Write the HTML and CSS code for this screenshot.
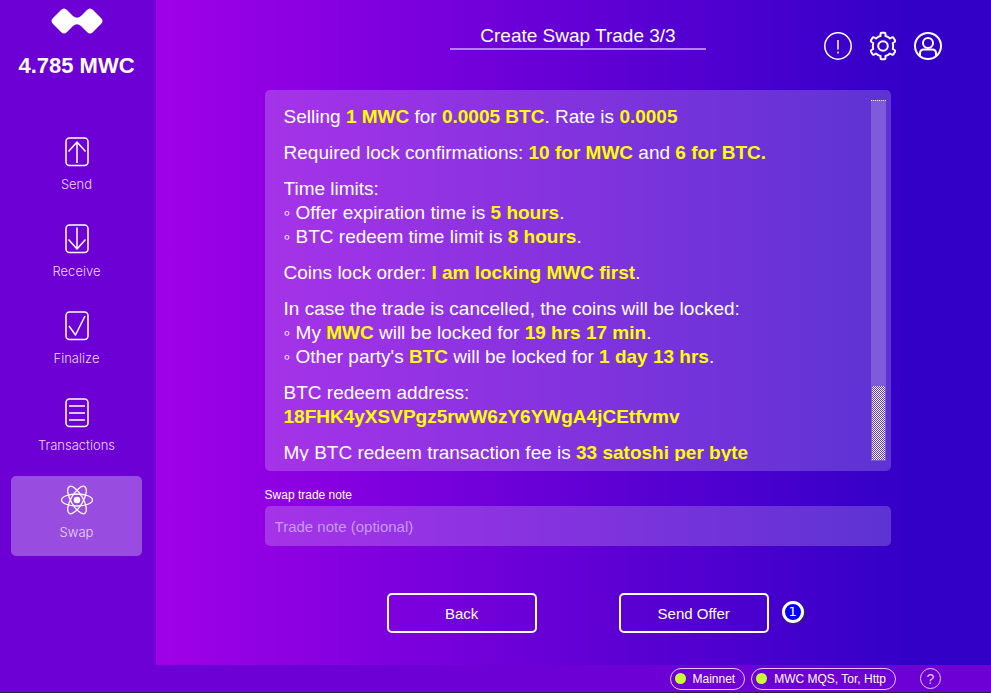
FILE: index.html
```html
<!DOCTYPE html>
<html lang="en">
<head>
<meta charset="utf-8">
<meta name="viewport" content="width=device-width, initial-scale=1">
<title>MWC Wallet</title>
<link rel="stylesheet" href="styles.css">
</head>
<body>
<div class="app">
  <aside class="sidebar">
    <svg class="logo" viewBox="0 0 52 26" aria-hidden="true"><path d="M10 2Q13 -1 16 2L22 8Q26 11.500 30 8L36 2Q39 -1 42 2L50 10Q53 13 50 16L42 24Q39 27 36 24L30 18Q26 14.500 22 18L16 24Q13 27 10 24L2 16Q-1 13 2 10Z"/></svg>
    <p class="balance">4.785 MWC</p>
    <nav class="nav" aria-label="Wallet">
      <a class="nav-item" href="#send">
        <svg viewBox="0 0 32 32" aria-hidden="true"><rect x="5" y="2" width="22" height="27.500" rx="3.500"/><path d="M16 27V6M7.500 15.500 16 6l8.500 9.500"/></svg>
        <span>Send</span>
      </a>
      <a class="nav-item" href="#receive">
        <svg viewBox="0 0 32 32" aria-hidden="true"><rect x="5" y="2" width="22" height="27.500" rx="3.500"/><path d="M16 4.500V26M7.500 16.500 16 26l8.500-9.500"/></svg>
        <span>Receive</span>
      </a>
      <a class="nav-item" href="#finalize">
        <svg viewBox="0 0 32 32" aria-hidden="true"><rect x="5" y="2" width="22" height="27.500" rx="3.500"/><path d="M8 16l6.500 9L24 6"/></svg>
        <span>Finalize</span>
      </a>
      <a class="nav-item" href="#transactions">
        <svg viewBox="0 0 32 32" aria-hidden="true"><rect x="5" y="2" width="22" height="27.500" rx="3.500"/><path d="M8 9h16M8 16h16M8 23h16"/></svg>
        <span>Transactions</span>
      </a>
      <a class="nav-item active" href="#swap" aria-current="page">
        <svg viewBox="0 0 32 32" aria-hidden="true"><g class="orbits"><ellipse cx="16" cy="16" rx="15.500" ry="6"/><ellipse cx="16" cy="16" rx="15.500" ry="6" transform="rotate(60 16 16)"/><ellipse cx="16" cy="16" rx="15.500" ry="6" transform="rotate(120 16 16)"/></g><circle class="solid" cx="16" cy="16" r="3.300"/></svg>
        <span>Swap</span>
      </a>
    </nav>
  </aside>

  <main class="main">
    <header class="header">
      <h1 class="title">Create Swap Trade 3/3</h1>
      <div class="tools">
        <button type="button" class="tool" aria-label="Notifications"><svg viewBox="0 0 30 30"><circle cx="15" cy="15" r="13.200"/><path d="M15 9v9.500M15 20.500v2"/></svg></button>
        <button type="button" class="tool" aria-label="Settings"><svg class="heavy" viewBox="0 0 30 30"><path d="M12.500 5V3Q12.500 1.800 13.700 1.800h2.600Q17.500 1.800 17.500 3v2Q20 5.500 22 7.500l1.800-1Q25 6 25.600 7L27 9.300q.5 1-.5 1.700L24.800 12q.8 3 0 6l1.700 1q1 .7.500 1.700L25.600 23q-.6 1-1.800.5l-1.800-1Q20 24.500 17.500 25v2q0 1.200-1.200 1.200h-2.600Q12.500 28.200 12.500 27v-2Q10 24.500 8 22.500l-1.800 1Q5 24 4.400 23L3 20.700Q2.500 19.700 3.500 19l1.700-1q-.8-3 0-6L3.500 11Q2.500 10.300 3 9.300L4.400 7Q5 6 6.200 6.500l1.800 1Q10 5.500 12.500 5Z"/><circle cx="15" cy="15" r="4.800"/></svg></button>
        <button type="button" class="tool" aria-label="Account"><svg class="heavy" viewBox="0 0 30 30"><circle cx="15" cy="15" r="13"/><circle cx="15" cy="12" r="5"/><path d="M7 25v-2.500Q7 18.500 11 18.500h8q4 0 4 4V25"/></svg></button>
      </div>
    </header>

    <form class="content">
      <section class="panel" aria-label="Trade summary">
        <div class="summary">
          <p>Selling <b>1 MWC</b> for <b>0.0005 BTC</b>. Rate is <b>0.0005</b></p>
          <p>Required lock confirmations: <b>10 for MWC</b> and <b>6 for BTC.</b></p>
          <p>Time limits:<br>◦ Offer expiration time is <b>5 hours</b>.<br>◦ BTC redeem time limit is <b>8 hours</b>.</p>
          <p>Coins lock order: <b>I am locking MWC first</b>.</p>
          <p>In case the trade is cancelled, the coins will be locked:<br>◦ My <b>MWC</b> will be locked for <b>19 hrs 17 min</b>.<br>◦ Other party's <b>BTC</b> will be locked for <b>1 day 13 hrs</b>.</p>
          <p>BTC redeem address:<br><b>18FHK4yXSVPgz5rwW6zY6YWgA4jCEtfvmv</b></p>
          <p>My BTC redeem transaction fee is <b>33 satoshi per byte</b></p>
        </div>
        <div class="track" aria-hidden="true"><div class="thumb"></div></div>
      </section>
      <label class="note-label" for="note">Swap trade note</label>
      <input class="note" id="note" type="text" placeholder="Trade note (optional)">
      <div class="actions">
        <button type="button" class="action">Back</button>
        <button type="button" class="action">Send Offer<span class="badge">1</span></button>
      </div>
    </form>
  </main>

  <footer class="footer">
    <button type="button" class="status"><span class="dot"></span>Mainnet</button>
    <button type="button" class="status"><span class="dot"></span>MWC MQS, Tor, Http</button>
    <button type="button" class="help" aria-label="Help">?</button>
  </footer>
</div>
</body>
</html>
```
FILE: styles.css
```css
* { box-sizing: border-box; }

body {
  margin: 0;
  color: #fff;
  background: #6d00d4;
  font-family: "Liberation Sans", Arial, sans-serif;
}

button { padding: 0; border: 0; background: none; color: inherit; font: inherit; }

p, h1 { margin: 0; }

svg { display: block; fill: none; stroke: #fff; stroke-width: 1.5; stroke-linejoin: round; }

.app {
  display: grid;
  grid-template-columns: 156px 1fr;
  grid-template-rows: 1fr 28px;
  min-height: 100vh;
}

/* Sidebar */
.sidebar { padding: 8px 14px 0 11px; }

.logo { width: 52px; height: 26px; margin: 0 auto; fill: #fff; stroke: none; }

.balance {
  margin: 19px 0 49px;
  font-size: 22px;
  font-weight: bold;
  line-height: 26px;
  text-align: center;
  white-space: nowrap;
}

.nav { display: grid; gap: 7px; }

.nav-item {
  display: flex;
  flex-direction: column;
  align-items: center;
  gap: 8px;
  height: 80px;
  padding-top: 8px;
  border-radius: 5px;
  color: #ead8fa;
  font-family: Inter, sans-serif;
  font-size: 13px;
  font-weight: 300;
  line-height: 16px;
  text-decoration: none;
}

.nav-item svg { width: 32px; height: 32px; }
.nav-item.active { background: #994de0; }
.orbits { stroke-width: 1.3; }
.solid { fill: #fff; stroke: none; }

/* Main area */
.main { background: linear-gradient(90deg, #a000e8, #3300c8 90%); }

.header {
  display: grid;
  grid-template-columns: 1fr 256px 1fr;
  align-items: start;
  padding: 23px 0 0 9px;
}

.title {
  border-bottom: 2px solid #b780ea;
  font-size: 19px;
  grid-column: 2;
  font-weight: normal;
  line-height: 25px;
  text-align: center;
}

.tools { display: flex; justify-content: flex-end; gap: 15px; padding: 8px 48px 0 0; }
.tool { width: 30px; height: 30px; }
.tool svg { width: 30px; height: 30px; }
.tool .heavy { stroke-width: 2; }

.content { margin: 29px 12% 32px 13%; }

.panel {
  display: flex;
  height: 381px;
  padding: 10px 5px 10px 19px;
  border-radius: 5px;
  background: rgb(255 255 255 / 20%);
}

.summary {
  flex: 1;
  padding-top: 5px;
  overflow: hidden;
  font-size: 19px;
  line-height: 24px;
}

.summary p + p { margin-top: 12px; }
.summary b { color: #ff0; }

.track {
  display: flex;
  align-items: flex-end;
  width: 15px;
  padding: 0 1px 1px;
  border-top: 1px dotted #fff;
  background: rgb(255 255 255 / 20%);
}

.thumb {
  width: 100%;
  height: 74px;
  background: repeating-conic-gradient(#fff 0 25%, #6030d0 0 50%) 0 0 / 2px 2px;
}

.note-label {
  display: block;
  margin-top: 17px;
  font-size: 12px;
  line-height: 14px;
}

.note {
  display: block;
  width: 100%;
  height: 40px;
  margin-top: 4px;
  padding: 0 10px;
  border: 0;
  border-radius: 5px;
  background: rgb(255 255 255 / 20%);
  color: #fff;
  font: 15px "Liberation Sans", Arial, sans-serif;
}

.note::placeholder { color: #c59af0; opacity: 1; }

.actions { display: flex; justify-content: center; gap: 82px; margin-top: 47px; }

.action {
  position: relative;
  width: 150px;
  height: 40px;
  border: 2px solid #fff;
  border-radius: 5px;
  font-size: 15px;
}

.badge {
  position: absolute;
  top: 6px;
  left: 161px;
  width: 22px;
  height: 22px;
  border: 3px solid #fff;
  border-radius: 50%;
  background: #00f;
  box-shadow: 1px 1px 3px #333;
  font: 13px/16px "DejaVu Sans", sans-serif;
}

/* Status bar */
.footer {
  grid-column: 1 / -1;
  display: flex;
  align-items: center;
  justify-content: flex-end;
  gap: 6px;
  padding-right: 50px;
  border-bottom: 1px solid #2b2035;
}

.status {
  display: flex;
  align-items: center;
  gap: 7px;
  height: 22px;
  padding: 0 9px 0 4px;
  border: 1px solid #e2c8f8;
  border-radius: 11px;
  font-size: 12px;
}

.dot { width: 11px; height: 11px; border-radius: 50%; background: #c8ff30; }

.help {
  width: 21px;
  height: 21px;
  margin-left: 18px;
  border: 1px solid #e2c8f8;
  border-radius: 50%;
  color: #e2c8f8;
  font-size: 14px;
}
```
